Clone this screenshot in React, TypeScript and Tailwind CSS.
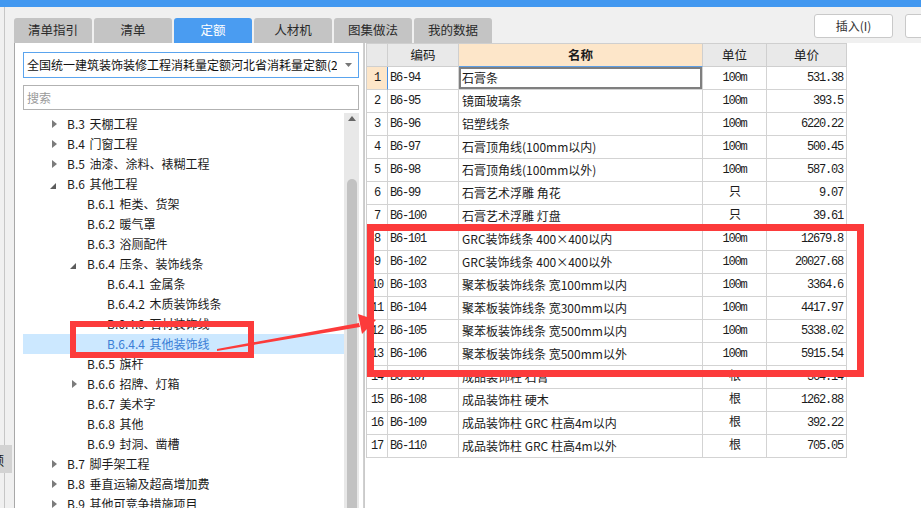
const tabs = ['清单指引', '清单', '定额', '人材机', '图集做法', '我的数据']

type Node = { label: string; level: number; arrow?: 'open' | 'closed'; selected?: boolean }

const tree: Node[] = [
  { label: 'B.3 天棚工程', level: 1, arrow: 'closed' },
  { label: 'B.4 门窗工程', level: 1, arrow: 'closed' },
  { label: 'B.5 油漆、涂料、裱糊工程', level: 1, arrow: 'closed' },
  { label: 'B.6 其他工程', level: 1, arrow: 'open' },
  { label: 'B.6.1 柜类、货架', level: 2 },
  { label: 'B.6.2 暖气罩', level: 2 },
  { label: 'B.6.3 浴厕配件', level: 2 },
  { label: 'B.6.4 压条、装饰线条', level: 2, arrow: 'open' },
  { label: 'B.6.4.1 金属条', level: 3 },
  { label: 'B.6.4.2 木质装饰线条', level: 3 },
  { label: 'B.6.4.3 石材装饰线', level: 3 },
  { label: 'B.6.4.4 其他装饰线', level: 3, selected: true },
  { label: 'B.6.5 旗杆', level: 2 },
  { label: 'B.6.6 招牌、灯箱', level: 2, arrow: 'closed' },
  { label: 'B.6.7 美术字', level: 2 },
  { label: 'B.6.8 其他', level: 2 },
  { label: 'B.6.9 封洞、凿槽', level: 2 },
  { label: 'B.7 脚手架工程', level: 1, arrow: 'closed' },
  { label: 'B.8 垂直运输及超高增加费', level: 1, arrow: 'closed' },
  { label: 'B.9 其他可竞争措施项目', level: 1, arrow: 'closed' },
]

const rows = [
  ['B6-94', '石膏条', '100m', '531.38'],
  ['B6-95', '镜面玻璃条', '100m', '393.5'],
  ['B6-96', '铝塑线条', '100m', '6220.22'],
  ['B6-97', '石膏顶角线(100mm以内)', '100m', '500.45'],
  ['B6-98', '石膏顶角线(100mm以外)', '100m', '587.03'],
  ['B6-99', '石膏艺术浮雕 角花', '只', '9.07'],
  ['B6-100', '石膏艺术浮雕 灯盘', '只', '39.61'],
  ['B6-101', 'GRC装饰线条 400×400以内', '100m', '12679.8'],
  ['B6-102', 'GRC装饰线条 400×400以外', '100m', '20027.68'],
  ['B6-103', '聚苯板装饰线条 宽100mm以内', '100m', '3364.6'],
  ['B6-104', '聚苯板装饰线条 宽300mm以内', '100m', '4417.97'],
  ['B6-105', '聚苯板装饰线条 宽500mm以内', '100m', '5338.02'],
  ['B6-106', '聚苯板装饰线条 宽500mm以外', '100m', '5915.54'],
  ['B6-107', '成品装饰柱 石膏', '根', '364.14'],
  ['B6-108', '成品装饰柱 硬木', '根', '1262.88'],
  ['B6-109', '成品装饰柱 GRC 柱高4m以内', '根', '392.22'],
  ['B6-110', '成品装饰柱 GRC 柱高4m以外', '根', '705.05'],
]

function Arrow({ kind }: { kind?: 'open' | 'closed' }) {
  if (kind === 'closed')
    return (
      <svg width="5" height="8" viewBox="0 0 5 8" className="ml-[5px]">
        <polygon points="0,0 5,4 0,8" fill="#7b7b7b" />
      </svg>
    )
  if (kind === 'open')
    return (
      <svg width="6" height="6" viewBox="0 0 6 6" className="ml-[3px] mt-[3px]">
        <polygon points="6,0 6,6 0,6" fill="#5c5c5c" />
      </svg>
    )
  return null
}

const mono = "font-['Liberation_Mono','Noto_Sans_CJK_SC',monospace] tracking-[-1.2px]"

export default function App() {
  return (
    <div className="relative w-[921px] h-[508px] overflow-hidden bg-[#f0f0f0] flex flex-col font-['Noto_Sans_CJK_SC',sans-serif] text-[12px] text-[#1b1b1b]">
      <div className="h-[7px] bg-[#4298f0] shrink-0" />
      <div className="flex flex-1 min-h-0">
        {/* left edge strip */}
        <div className="w-[14px] shrink-0 flex flex-col">
          <div className="w-[5px] h-[438px] border-r border-[#c6c6c6]" />
          <div className="h-[28px] w-[12px] bg-[#d3d3d3] overflow-hidden flex items-center">
            <span className="-ml-[9px] text-[13px] leading-none">额</span>
          </div>
          <div className="w-[5px] flex-1 border-r border-[#c6c6c6]" />
        </div>

        <div className="flex-1 flex flex-col min-w-0">
          {/* tabs + buttons */}
          <div className="h-[36px] shrink-0 flex items-start">
            <div className="flex gap-[2px] mt-[11px] shrink-0">
              {tabs.map((t) => (
                <div
                  key={t}
                  className={
                    'w-[78px] h-[25px] rounded-t-[3px] flex items-center justify-center text-[12.5px] ' +
                    (t === '定额' ? 'bg-[#4a9cf1] text-white' : 'bg-[#c4c4c4] text-[#2a2a2a]')
                  }
                >
                  {t}
                </div>
              ))}
            </div>
            <div className="ml-[322px] mt-[7px] flex gap-[12px] shrink-0">
              <div className="w-[79px] h-[24px] bg-white border border-[#c9c9c9] rounded-[3px] flex items-center justify-center text-[#333]">
                插入(I)
              </div>
              <div className="w-[79px] h-[24px] bg-white border border-[#c9c9c9] rounded-[3px]" />
            </div>
          </div>

          <div className="flex-1 flex min-h-0">
            {/* left panel */}
            <div className="w-[350px] shrink-0 bg-white border-l border-r border-l-[#a8a8a8] border-r-[#d0d0d0] flex flex-col pl-[8px] pr-[4px] pt-[9px]">
              <div className="h-[26px] border border-[#5aa4ee] flex items-center pl-[3px] pr-[6px] shrink-0">
                <span className="flex-1 overflow-hidden whitespace-nowrap text-[12px] text-[#111]">
                  全国统一建筑装饰装修工程消耗量定额河北省消耗量定额(2012)
                </span>
                <svg width="7" height="4" viewBox="0 0 7 4" className="ml-[8px] shrink-0">
                  <polygon points="0,0 7,0 3.5,4" fill="#777" />
                </svg>
              </div>
              <div className="h-[25px] mt-[7px] border border-[#b2b2b2] flex items-center pl-[3px] text-[12px] text-[#9a9a9a] shrink-0">
                搜索
              </div>
              <div className="flex flex-1 mt-[3px] min-h-0 overflow-hidden">
                <div className="flex-1 pt-[1px] flex flex-col">
                  {tree.map((n) => (
                    <div
                      key={n.label}
                      className={
                        'h-[20px] shrink-0 flex items-center ' +
                        (n.selected ? 'bg-[#cce8ff] text-[#3a7ed6]' : '')
                      }
                      style={{ paddingLeft: 24 + (n.level - 1) * 20 }}
                    >
                      <div className="w-[20px] h-[20px] flex items-center">
                        <Arrow kind={n.arrow} />
                      </div>
                      <span className="whitespace-nowrap text-[12px] leading-none [word-spacing:2px]">{n.label}</span>
                    </div>
                  ))}
                </div>
                <div className="w-[15px] bg-[#e8e8e8] flex flex-col items-center pt-[3px]">
                  <svg width="8" height="5" viewBox="0 0 8 5">
                    <polygon points="0,5 8,5 4,0" fill="#666" />
                  </svg>
                  <div className="w-[10px] flex-1 mt-[58px] rounded-t-[5px] bg-[#c2c2c2]" />
                </div>
              </div>
            </div>

            {/* table */}
            <div className="flex-1 bg-white border-l border-[#cacaca] pl-[1px]">
              <div className="grid grid-cols-[21px_71px_244px_64px_80px] w-fit border-l border-t border-[#cfcfcf]">
                <div className="h-[23px] bg-[#e9e9e9] border-r border-b border-[#cfcfcf]" />
                <div className="h-[23px] bg-[#e9e9e9] border-r border-b border-[#cfcfcf] flex items-center justify-center text-[12.5px]">编码</div>
                <div className="h-[23px] bg-[#fde6c9] border-r border-b border-r-[#cfcfcf] border-b-[#5d9fe6] flex items-center justify-center text-[12.5px] font-bold">名称</div>
                <div className="h-[23px] bg-[#e9e9e9] border-r border-b border-[#cfcfcf] flex items-center justify-center text-[12.5px]">单位</div>
                <div className="h-[23px] bg-[#e9e9e9] border-r border-b border-[#cfcfcf] flex items-center justify-center text-[12.5px]">单价</div>
                {rows.map((r, i) => {
                  const first = i === 0
                  return [
                    <div
                      key={r[0] + 'n'}
                      className={
                        'h-[23px] border-r border-b border-b-[#d3d3d3] flex items-center justify-center ' +
                        mono +
                        (first ? ' bg-[#fde6c9] border-r-[#4a92e6]' : ' border-r-[#d3d3d3]')
                      }
                    >
                      {i + 1}
                    </div>,
                    <div key={r[0] + 'c'} className={'h-[23px] border-r border-b border-[#d3d3d3] flex items-center pl-[2px] ' + mono}>
                      {r[0]}
                    </div>,
                    <div
                      key={r[0] + 'm'}
                      className={
                        'h-[23px] border-r border-b border-[#d3d3d3] flex items-center pl-[3px] text-[12px] whitespace-nowrap ' +
                        (first ? 'shadow-[inset_0_0_0_2px_#7f7f7f]' : '')
                      }
                    >
                      {r[1]}
                    </div>,
                    <div key={r[0] + 'u'} className={'h-[23px] border-r border-b border-[#d3d3d3] flex items-center justify-center ' + mono}>
                      {r[2]}
                    </div>,
                    <div key={r[0] + 'p'} className={'h-[23px] border-r border-b border-[#d3d3d3] flex items-center justify-end pr-[3px] ' + mono}>
                      {r[3]}
                    </div>,
                  ]
                })}
              </div>
            </div>
          </div>
        </div>
      </div>

      {/* red annotations */}
      <div className="absolute left-[70px] top-[321px] w-[184px] h-[37px] border-[6px] border-[#fc3b3b] pointer-events-none" />
      <div className="absolute left-[367px] top-[224px] w-[497px] h-[153px] border-[7px] border-[#fc3b3b] pointer-events-none" />
      <svg className="absolute left-0 top-0 pointer-events-none" width="921" height="508" viewBox="0 0 921 508">
        <polygon points="217,349 359,323 360,327 217,351" fill="#fc3b3b" />
        <polygon points="376,320 358,314 362,334" fill="#fc3b3b" />
      </svg>
    </div>
  )
}
